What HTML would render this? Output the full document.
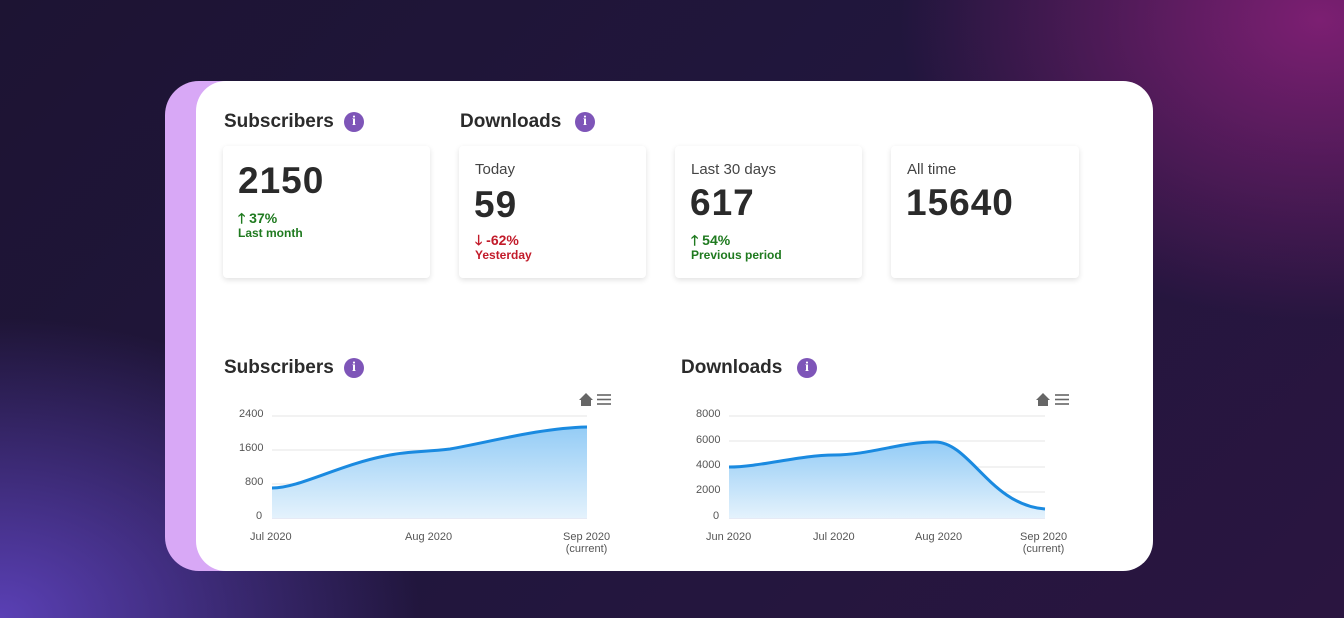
<!DOCTYPE html>
<html><head><meta charset="utf-8"><style>
*{margin:0;padding:0;box-sizing:border-box}
body{width:1344px;height:618px;overflow:hidden;position:relative;font-family:"Liberation Sans",sans-serif;
background:radial-gradient(ellipse 420px 300px at 1320px 20px,#7c1f72 0%,rgba(124,31,114,0) 100%),radial-gradient(ellipse 420px 300px at 0px 618px,#5a40b5 0%,rgba(90,64,181,0) 100%),linear-gradient(135deg,#1d1433 0%,#21163d 50%,#2a1540 100%)}
.a{position:absolute}
.strip{left:165px;top:81px;width:120px;height:490px;background:#d8a8f6;border-radius:34px 0 0 34px}
.card{left:196px;top:81px;width:957px;height:490px;background:#fff;border-radius:30px}
.h{font-weight:bold;font-size:19px;color:#2b2b2b}
.i{width:20px;height:20px;border-radius:50%;background:#7e55b8;color:#fff;font:bold 14px "Liberation Serif",serif;text-align:center;line-height:20px}
.box{background:#fff;border-radius:4px;box-shadow:0 2px 6px rgba(0,0,0,.12);width:187px;height:132px;top:146px}
.lbl{font-size:15px;color:#444}
.num{font-weight:bold;font-size:37px;color:#2a2a2a;letter-spacing:1px}
.g{color:#1f7a1f;font-weight:bold;font-size:14px}
.r{color:#c21b2a;font-weight:bold;font-size:14px}
.s{font-size:12px}
.ax{font-size:11px;color:#555}
</style></head><body>
<div class="a strip"></div>
<div class="a card"></div>

<div class="a h" style="left:224px;top:111px">Subscribers</div><div class="a i" style="left:344px;top:112px">i</div>
<div class="a h" style="left:460px;top:111px">Downloads</div><div class="a i" style="left:575px;top:112px">i</div>

<div class="a box" style="left:223px;width:207px"></div>
<div class="a num" style="left:238px;top:160px">2150</div>
<div class="a g" style="left:238px;top:208px">🡑 37%</div>
<div class="a g s" style="left:238px;top:226px;font-weight:bold">Last month</div>

<div class="a box" style="left:459px"></div>
<div class="a lbl" style="left:475px;top:161px">Today</div>
<div class="a num" style="left:474px;top:184px">59</div>
<div class="a r" style="left:475px;top:230px">🡓 -62%</div>
<div class="a r s" style="left:475px;top:248px">Yesterday</div>

<div class="a box" style="left:675px"></div>
<div class="a lbl" style="left:691px;top:161px">Last 30 days</div>
<div class="a num" style="left:690px;top:182px">617</div>
<div class="a g" style="left:691px;top:230px">🡑 54%</div>
<div class="a g s" style="left:691px;top:248px">Previous period</div>

<div class="a box" style="left:891px;width:188px"></div>
<div class="a lbl" style="left:907px;top:161px">All time</div>
<div class="a num" style="left:906px;top:182px">15640</div>

<div class="a h" style="left:224px;top:357px">Subscribers</div><div class="a i" style="left:344px;top:358px">i</div>
<div class="a h" style="left:681px;top:357px">Downloads</div><div class="a i" style="left:797px;top:358px">i</div>

<svg class="a" style="left:0;top:0" width="1344" height="618">
<defs><linearGradient id="f" x1="0" y1="0" x2="0" y2="1"><stop offset="0" stop-color="#94ccf6"/><stop offset="1" stop-color="#e4f2fc"/></linearGradient></defs>
<g stroke="#e6e6e6" stroke-width="1">
<line x1="272" y1="416" x2="587" y2="416"/><line x1="272" y1="450" x2="587" y2="450"/><line x1="272" y1="484" x2="587" y2="484"/>
<line x1="729" y1="416" x2="1045" y2="416"/><line x1="729" y1="441" x2="1045" y2="441"/><line x1="729" y1="467" x2="1045" y2="467"/><line x1="729" y1="492" x2="1045" y2="492"/>
</g>
<line x1="272" y1="518" x2="587" y2="518" stroke="#ccd6eb"/><line x1="729" y1="518" x2="1045" y2="518" stroke="#ccd6eb"/>
<path d="M272 488 C300 488 340 464 390 455 C410 451 425 452 450 449 C490 442 540 428 587 427 L587 518 L272 518Z" fill="url(#f)"/>
<path d="M272 488 C300 488 340 464 390 455 C410 451 425 452 450 449 C490 442 540 428 587 427" fill="none" stroke="#1a8ae0" stroke-width="3"/>
<path d="M729 467 C760 467 800 455 834 455 C870 455 900 442 935 442 C970 442 990 505 1045 509 L1045 518 L729 518Z" fill="url(#f)"/>
<path d="M729 467 C760 467 800 455 834 455 C870 455 900 442 935 442 C970 442 990 505 1045 509" fill="none" stroke="#1a8ae0" stroke-width="3"/>
<path d="M579 400 L586 393 L593 400 H591 V406 H581 V400Z" fill="#666"/>
<g stroke="#666" stroke-width="1.6"><line x1="597" y1="395" x2="611" y2="395"/><line x1="597" y1="399.5" x2="611" y2="399.5"/><line x1="597" y1="404" x2="611" y2="404"/></g>
<path d="M1036 400 L1043 393 L1050 400 H1048 V406 H1038 V400Z" fill="#666"/>
<g stroke="#666" stroke-width="1.6"><line x1="1055" y1="395" x2="1069" y2="395"/><line x1="1055" y1="399.5" x2="1069" y2="399.5"/><line x1="1055" y1="404" x2="1069" y2="404"/></g>
</svg>

<div class="a ax" style="left:239px;top:408px">2400</div><div class="a ax" style="left:239px;top:442px">1600</div><div class="a ax" style="left:245px;top:476px">800</div><div class="a ax" style="left:256px;top:510px">0</div>
<div class="a ax" style="left:250px;top:531px">Jul 2020</div><div class="a ax" style="left:405px;top:531px">Aug 2020</div><div class="a ax" style="left:563px;top:531px;text-align:center">Sep 2020<br>(current)</div>
<div class="a ax" style="left:696px;top:408px">8000</div><div class="a ax" style="left:696px;top:434px">6000</div><div class="a ax" style="left:696px;top:459px">4000</div><div class="a ax" style="left:696px;top:484px">2000</div><div class="a ax" style="left:713px;top:510px">0</div>
<div class="a ax" style="left:706px;top:531px">Jun 2020</div><div class="a ax" style="left:813px;top:531px">Jul 2020</div><div class="a ax" style="left:915px;top:531px">Aug 2020</div><div class="a ax" style="left:1020px;top:531px;text-align:center">Sep 2020<br>(current)</div>
</body></html>
